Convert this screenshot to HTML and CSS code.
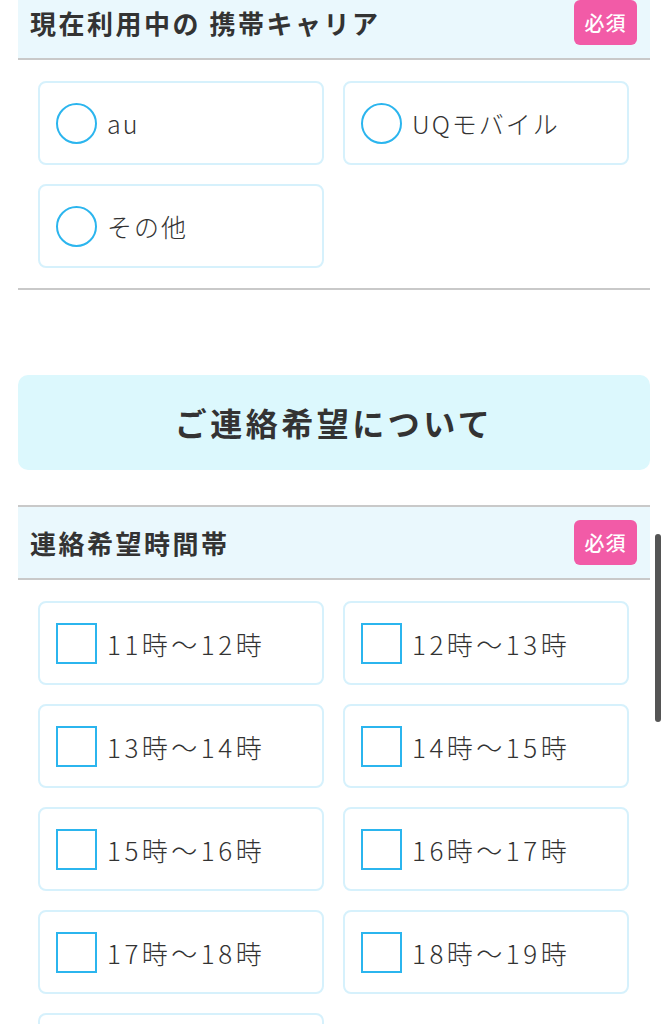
FILE: index.html
```html
<!DOCTYPE html>
<html lang="ja">
<head>
    <meta charset="UTF-8">
    <meta name="viewport" content="width=device-width, initial-scale=1.0">
    <title>お申し込みフォーム</title>
    <link rel="stylesheet" href="styles.css">
</head>
<body>
    <div class="page">
        <!-- 携帯キャリア -->
        <div class="field">
            <div class="field-head">
                <span class="field-title">現在利用中の 携帯キャリア</span>
                <span class="required">必須</span>
            </div>
            <div class="options">
                <label class="option"><span class="radio"></span>au</label>
                <label class="option"><span class="radio"></span>UQモバイル</label>
                <label class="option"><span class="radio"></span>その他</label>
            </div>
        </div>

        <h2 class="section-title">ご連絡希望について</h2>

        <!-- 連絡希望時間帯 -->
        <div class="field">
            <div class="field-head">
                <span class="field-title">連絡希望時間帯</span>
                <span class="required">必須</span>
            </div>
            <div class="options options-time">
                <label class="option"><span class="check"></span>11時～12時</label>
                <label class="option"><span class="check"></span>12時～13時</label>
                <label class="option"><span class="check"></span>13時～14時</label>
                <label class="option"><span class="check"></span>14時～15時</label>
                <label class="option"><span class="check"></span>15時～16時</label>
                <label class="option"><span class="check"></span>16時～17時</label>
                <label class="option"><span class="check"></span>17時～18時</label>
                <label class="option"><span class="check"></span>18時～19時</label>
                <label class="option"><span class="check"></span>19時～20時</label>
            </div>
        </div>
    </div>

    <div class="scrollbar"></div>
</body>
</html>
```

FILE: styles.css
```css
/* 基本スタイル */
body {
    margin: 0;
    font-family: "Noto Sans CJK JP", "Noto Sans", sans-serif;
    color: #333;
    background-color: #fff;
}
.page {
    margin-top: -15px; /* 画面はスクロール途中 */
    padding: 0 17px 0 18px;
}

/* 項目 */
.field {
    border-bottom: 2px solid #c9c9c9;
}
.field-head {
    display: flex;
    align-items: center;
    justify-content: space-between;
    height: 71px;
    padding: 0 13px 0 12px;
    background-color: #eaf8fd;
    border-top: 2px solid #c9c9c9;
    border-bottom: 2px solid #c9c9c9;
}
.field-title {
    font-size: 26px;
    font-weight: bold;
    letter-spacing: 2.5px;
}
.required {
    display: flex;
    align-items: center;
    justify-content: center;
    width: 63px;
    height: 45px;
    border-radius: 6px;
    background-color: #f25ba7;
    color: #fff;
    font-size: 20px;
    font-weight: 500;
    letter-spacing: 1px;
}

/* 選択肢 */
.options {
    display: grid;
    grid-template-columns: 1fr 1fr;
    gap: 19px;
    padding: 21px 21px 20px 20px;
}
.option {
    display: flex;
    align-items: center;
    gap: 10px;
    height: 80px;
    padding-left: 16px;
    border: 2px solid #d6f1fc;
    border-radius: 8px;
    font-size: 25px;
    font-weight: 300;
    letter-spacing: 2px;
    cursor: pointer;
}
.options-time .option {
    font-size: 26px;
    letter-spacing: 3.5px; /* 数字が広め */
}
.radio,
.check {
    flex: none;
    width: 37px;
    height: 37px;
    border: 2px solid #2bb5ee;
}
.radio {
    border-radius: 50%;
}

/* 見出し */
.section-title {
    margin: 85px 0 35px;
    height: 95px;
    line-height: 95px;
    border-radius: 10px;
    background-color: #dcf8fd;
    text-align: center;
    font-size: 32px;
    font-weight: bold;
    letter-spacing: 3.5px;
}

/* スクロールバー */
.scrollbar {
    position: fixed;
    top: 534px;
    right: 6px;
    width: 6px;
    height: 188px;
    border-radius: 3px;
    background-color: #555;
}
```
